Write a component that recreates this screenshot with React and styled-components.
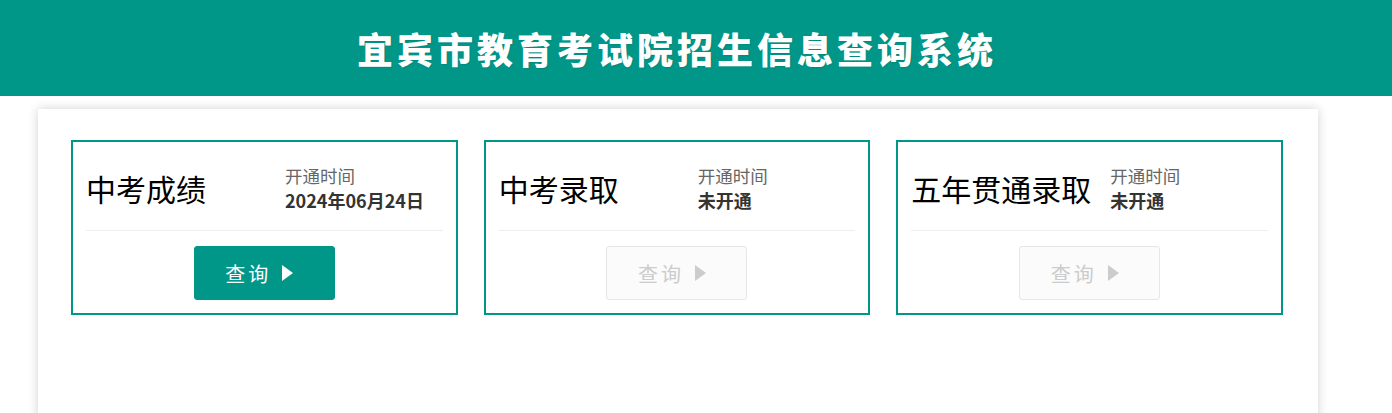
import React from "react";
import styled, { createGlobalStyle } from "styled-components";

const GlobalStyle = createGlobalStyle`
  html, body { margin: 0; padding: 0; background: #fff; }
  body { font-family: "Noto Sans CJK SC", "Noto Sans", sans-serif; }
  * { box-sizing: border-box; }
`;

const Page = styled.div`
  width: 1392px;
  height: 413px;
  overflow: hidden;
`;

const Header = styled.header`
  height: 96px;
  background: #009688;
`;

const HeaderInner = styled.div`
  width: 1280px;
  margin-left: 38px;
  height: 96px;
  display: flex;
  align-items: center;
  justify-content: center;
`;

const SiteTitle = styled.h1`
  margin: 0;
  padding-right: 2px;
  color: #fff;
  font-family: "Noto Sans CJK SC", sans-serif;
  font-weight: 900;
  font-size: 36px;
  letter-spacing: 4px;
  line-height: 1;
  text-shadow: 1px 1px 1px rgba(0, 0, 0, 0.08);
`;

const Main = styled.main`
  width: 1280px;
  margin: 13px 0 0 38px;
  min-height: 330px;
  background: #fff;
  box-shadow: 0 0 10px rgba(0, 0, 0, 0.18);
  padding: 31px 35px 0 33px;
  display: grid;
  grid-template-columns: repeat(3, 1fr);
  gap: 26px;
  align-content: start;
`;

const Card = styled.section`
  border: 2px solid #009688;
  padding: 0 13px;
  background: #fff;
`;

const CardHead = styled.div`
  height: 89px;
  display: grid;
  grid-template-columns: 199px 1fr;
  align-items: center;
  border-bottom: 1px solid #eeeeee;
  padding-top: 4px;
`;

const CardTitle = styled.h2`
  margin: 0;
  font-family: "Noto Sans CJK SC", sans-serif;
  font-weight: 400;
  font-size: 30px;
  line-height: 36px;
  color: #000;
  white-space: nowrap;
`;

const OpenInfo = styled.div`
  display: flex;
  flex-direction: column;
  line-height: 25px;
  white-space: nowrap;
`;

const OpenLabel = styled.span`
  color: #666;
  font-weight: 400;
  font-size: 17.5px;
`;

const OpenValue = styled.span`
  color: #333;
  font-weight: 700;
  font-size: 18px;
`;

const CardFoot = styled.div`
  display: flex;
  justify-content: center;
  padding: 15px 0 13px;
`;

const QueryButton = styled.button`
  width: 141px;
  height: 54px;
  border-radius: 3px;
  display: flex;
  align-items: center;
  justify-content: center;
  padding: 0 10px 0 0;
  font-family: "Noto Sans CJK SC", sans-serif;
  font-size: 20px;
  letter-spacing: 3px;
  cursor: ${(p) => (p.disabled ? "not-allowed" : "pointer")};
  background: ${(p) => (p.disabled ? "#fbfbfb" : "#009688")};
  border: 1px solid ${(p) => (p.disabled ? "#e6e6e6" : "#009688")};
  color: ${(p) => (p.disabled ? "#cccccc" : "#ffffff")};
`;

const Arrow = styled.svg`
  margin-left: 11px;
  width: 11px;
  height: 16px;
  fill: currentColor;
`;

const cards = [
  { title: "中考成绩", value: "2024年06月24日", enabled: true },
  { title: "中考录取", value: "未开通", enabled: false },
  { title: "五年贯通录取", value: "未开通", enabled: false },
];

export default function App() {
  return (
    <Page>
      <GlobalStyle />
      <Header>
        <HeaderInner>
          <SiteTitle>宜宾市教育考试院招生信息查询系统</SiteTitle>
        </HeaderInner>
      </Header>
      <Main>
        {cards.map((c) => (
          <Card key={c.title}>
            <CardHead>
              <CardTitle>{c.title}</CardTitle>
              <OpenInfo>
                <OpenLabel>开通时间</OpenLabel>
                <OpenValue>{c.value}</OpenValue>
              </OpenInfo>
            </CardHead>
            <CardFoot>
              <QueryButton disabled={!c.enabled}>
                查询
                <Arrow viewBox="0 0 11 16">
                  <polygon points="0,0 11,8 0,16" />
                </Arrow>
              </QueryButton>
            </CardFoot>
          </Card>
        ))}
      </Main>
    </Page>
  );
}
